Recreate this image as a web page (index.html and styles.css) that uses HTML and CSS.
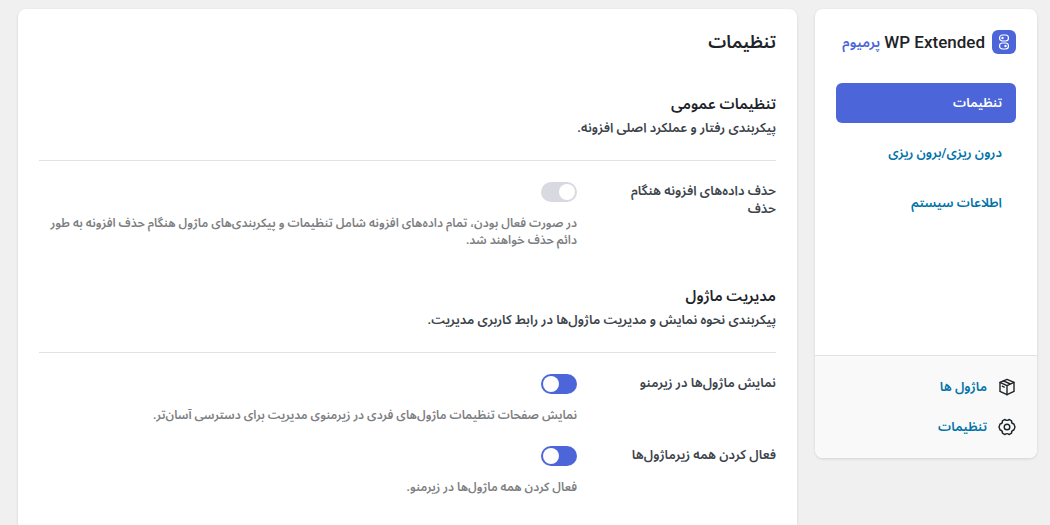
FILE: index.html
```html
<!DOCTYPE html>
<html lang="fa" dir="rtl">
<head>
  <meta charset="UTF-8">
  <meta name="viewport" content="width=device-width, initial-scale=1.0">
  <title>تنظیمات - WP Extended</title>
  <link rel="stylesheet" href="styles.css">
</head>
<body>
  <div class="layout">
    <!-- Sidebar -->
    <aside class="sidebar">
      <div class="brand">
        <svg class="brand-logo" viewBox="0 0 24 24" fill="none" aria-hidden="true">
          <rect width="24" height="24" rx="6" fill="#4c66d9"/>
          <rect x="7.5" y="5" width="9" height="6" rx="3" stroke="#fff" stroke-width="1.2"/>
          <circle cx="10.5" cy="8" r="1.2" fill="#fff"/>
          <rect x="7.5" y="13" width="9" height="6" rx="3" stroke="#fff" stroke-width="1.2"/>
          <circle cx="13.5" cy="16" r="1.2" fill="#fff"/>
        </svg>
        <span class="brand-name" dir="ltr">WP Extended</span>
        <span class="brand-plan">پرمیوم</span>
      </div>

      <nav class="nav">
        <a class="nav-link active" href="#general">تنظیمات</a>
        <a class="nav-link" href="#import">درون ریزی/برون ریزی</a>
        <a class="nav-link" href="#system">اطلاعات سیستم</a>
      </nav>

      <div class="sidebar-footer">
        <a class="footer-link" href="#modules">
          <svg viewBox="0 0 18 18" fill="none" stroke="#1d2327" stroke-width="1.4" stroke-linejoin="round" stroke-linecap="round" aria-hidden="true">
            <path d="M9 1.4 16 4.4V13.4L9 16.7 2 13.4V4.4Z"/>
            <path d="M2 4.4 9 7.6 16 4.4M9 7.6V16.7M5.4 2.9 12.4 6M4.3 8.2 6.2 9.1"/>
          </svg>
          <span>ماژول ها</span>
        </a>
        <a class="footer-link" href="#settings">
          <svg viewBox="0 0 18 18" fill="none" stroke="#1d2327" stroke-width="1.4" stroke-linejoin="round" aria-hidden="true">
            <path d="M7 1.4Q9 3.4 11 1.4L13.6 2.8Q13.1 5.4 15.9 6L17 9 15.9 12Q13.1 12.6 13.6 15.2L11 16.6Q9 14.6 7 16.6L4.4 15.2Q4.9 12.6 2.1 12L1 9 2.1 6Q4.9 5.4 4.4 2.8Z"/>
            <circle cx="9" cy="9" r="2.8"/>
          </svg>
          <span>تنظیمات</span>
        </a>
      </div>
    </aside>

    <!-- Settings panel -->
    <main class="panel">
      <h1>تنظیمات</h1>

      <section class="section">
        <div class="section-header">
          <h2>تنظیمات عمومی</h2>
          <p>پیکربندی رفتار و عملکرد اصلی افزونه.</p>
        </div>
        <div class="field">
          <label for="remove-data">حذف داده‌های افزونه هنگام حذف</label>
          <div class="control">
            <input type="checkbox" class="toggle" id="remove-data">
            <p>در صورت فعال بودن، تمام داده‌های افزونه شامل تنظیمات و پیکربندی‌های ماژول هنگام حذف افزونه به طور دائم حذف خواهند شد.</p>
          </div>
        </div>
      </section>

      <section class="section">
        <div class="section-header">
          <h2>مدیریت ماژول</h2>
          <p>پیکربندی نحوه نمایش و مدیریت ماژول‌ها در رابط کاربری مدیریت.</p>
        </div>
        <div class="field">
          <label for="show-modules">نمایش ماژول‌ها در زیرمنو</label>
          <div class="control">
            <input type="checkbox" class="toggle" id="show-modules" checked>
            <p>نمایش صفحات تنظیمات ماژول‌های فردی در زیرمنوی مدیریت برای دسترسی آسان‌تر.</p>
          </div>
        </div>
        <div class="field">
          <label for="enable-all">فعال کردن همه زیرماژول‌ها</label>
          <div class="control">
            <input type="checkbox" class="toggle" id="enable-all" checked>
            <p>فعال کردن همه ماژول‌ها در زیرمنو.</p>
          </div>
        </div>
      </section>
    </main>
  </div>
</body>
</html>
```

FILE: styles.css
```css
* {
  box-sizing: border-box;
}

body {
  margin: 0;
  background-color: #f0f0f1;
  color: #3c434a;
  font-family: Roboto, "Noto Sans Arabic", Vazirmatn, sans-serif;
  font-size: 13px;
  line-height: 18px;
}

h1,
h2,
p {
  margin: 0;
}

a {
  color: #0073aa;
  text-decoration: none;
}

.layout {
  display: flex;
  align-items: flex-start;
  gap: 18px;
  padding: 9px 13px 0 18px;
}

/* Sidebar */
.sidebar {
  flex: 0 0 222px;
  background-color: #fff;
  border-radius: 8px;
  box-shadow: 0 1px 3px rgba(0, 0, 0, 0.12);
  overflow: hidden;
}

.brand {
  display: flex;
  align-items: center;
  padding: 21px 21px 0;
  height: 45px;
}

.brand-logo {
  width: 24px;
  height: 24px;
  margin-left: 7px;
}

.brand-name {
  margin-left: 4px;
  color: #1d2327;
  font-size: 17px;
  font-weight: 500;
}

.brand-plan {
  color: #4c66d9;
  font-size: 14px;
  font-weight: 600;
}

.nav {
  display: flex;
  flex-direction: column;
  gap: 10px;
  min-height: 301px;
  padding: 29px 21px 0;
}

.nav-link {
  padding: 11px 14px;
  border-radius: 6px;
  font-weight: 600;
}

.nav-link.active {
  background-color: #4c66d9;
  color: #fff;
}

.sidebar-footer {
  display: flex;
  flex-direction: column;
  gap: 18px;
  padding: 20px 21px;
  border-top: 1px solid #e2e2e4;
  background-color: #f9f9f9;
}

.footer-link {
  display: flex;
  align-items: center;
  gap: 11px;
  height: 22px;
  font-weight: 600;
}

.footer-link svg {
  width: 18px;
  height: 18px;
}

/* Settings panel */
.panel {
  flex: 1;
  padding: 21px;
  background-color: #fff;
  border-radius: 8px;
  box-shadow: 0 1px 3px rgba(0, 0, 0, 0.12);
}

h1 {
  color: #1d2327;
  font-size: 18px;
  font-weight: 600;
  line-height: 24px;
}

h2 {
  margin-bottom: 3px;
  color: #1d2327;
  font-size: 15px;
  font-weight: 600;
  line-height: 24px;
}

.section {
  padding-top: 38px;
}

.section + .section {
  padding-top: 13px;
}

.section-header {
  margin-bottom: 21px;
  padding-bottom: 23px;
  border-bottom: 1px solid #e2e2e4;
  font-weight: 600;
}

.field {
  display: flex;
  margin-bottom: 22px;
}

.field label {
  flex: 0 0 199px;
  padding-left: 30px;
  font-weight: 600;
}

.control {
  flex: 1;
}

.control p {
  margin-top: 13px;
  color: #7c7e81;
  font-size: 12px;
  font-weight: 600;
  line-height: 17px;
}

/* Toggle switch */
.toggle {
  display: block;
  appearance: none;
  width: 36px;
  height: 20px;
  margin: 0;
  padding: 2px;
  border-radius: 10px;
  background-color: #d9dae1;
  cursor: pointer;
}

.toggle::before {
  content: "";
  display: block;
  width: 16px;
  height: 16px;
  border-radius: 50%;
  background-color: #fff;
}

.toggle:checked {
  background-color: #4c66d9;
}

.toggle:checked::before {
  margin-right: 16px;
}
```
